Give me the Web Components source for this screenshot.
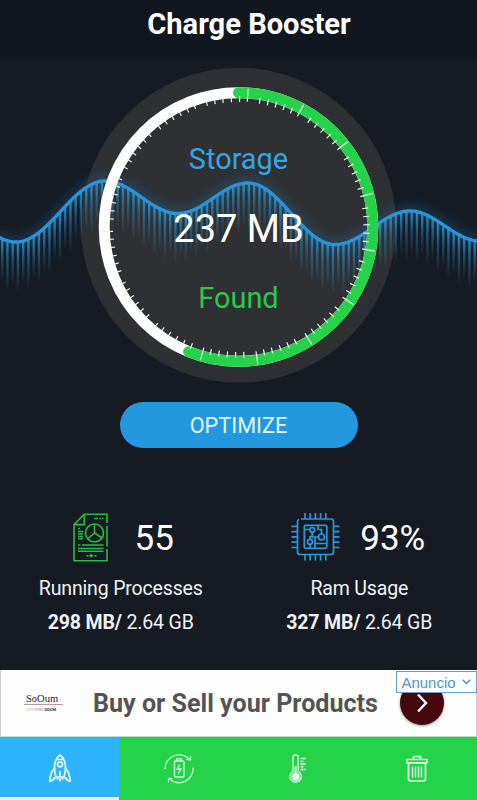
<!DOCTYPE html>
<html lang="en">
<head>
<meta charset="utf-8">
<title>Charge Booster</title>
<style>
    body { margin: 0; background: #161b23; font-family: Roboto, "Liberation Sans", sans-serif; }
</style>
</head>
<body>
<booster-app></booster-app>

<script>
const ICONS = {
    report: `<svg width="36" height="50" viewBox="0 0 36 50" fill="none" stroke="#2aba45" stroke-width="1.6">
        <path d="M34 11V2.2H11.3L1 12.6V48.8H34V37M34 34.5V14M11.3 2.2V12.6H1"/>
        <circle cx="21.5" cy="21" r="9"/>
        <path d="M21.5 12V21L14.5 27M21.5 21L29 26"/>
        <path d="M5 16.5H7M5 19.5H10M5 22H10M5 24.5H10M5 26.8H10M21 6.5H25M26.5 6.5H28M29 6.5H30.5M5 33H7.5M9 33H30.5M5 36.5H30.5M5 39.3H30.5M13.5 43.8H15.5M16.5 43.8H20M21.5 43.8H23.5M18.2 42V45.5"/>
    </svg>`,
    chip: `<svg width="49" height="50" viewBox="0 0 49 50" fill="none" stroke="#2b99d8" stroke-width="1.7">
        <path d="M10 7H40Q42.5 7 42.5 9.5V40Q42.5 42.5 40 42.5H9Q6.5 42.5 6.5 40V9.5Q6.5 8 8 7.3"/>
        <rect x="13.3" y="13.3" width="22.5" height="23" rx="1.5"/>
        <path d="M14 1V7M19.2 1V7M24.4 1V7M29.6 1V7M34.8 1V7M14 42.5V48.5M19.2 42.5V48.5M24.4 42.5V48.5M29.6 42.5V48.5M34.8 42.5V48.5M.5 14.3H6.5M.5 19.6H6.5M.5 24.9H6.5M.5 30.2H6.5M.5 35.5H6.5M42.5 14.3H48.5M42.5 19.6H48.5M42.5 24.9H48.5M42.5 30.2H48.5M42.5 35.5H48.5"/>
        <circle cx="21.2" cy="18" r="2.3"/><circle cx="30.5" cy="25" r="3"/><circle cx="19" cy="29.8" r="2.5"/>
        <path d="M13.3 17.5H19M21.2 20.5V25H27.5M24 25V36M30.5 22V17.5H27V13.5M19 32.5V36M24 31.5H35.5M19 27.3V24.5H21"/>
    </svg>`,
    rocket: `<svg width="22" height="29" viewBox="0 0 22 29" fill="none" stroke="#e8fbff" stroke-width="1.7" stroke-linejoin="round">
        <path d="M11 1C7.5 3.7 5.5 8 5.5 13C5.5 17 6 20 7 23H15C16 20 16.5 17 16.5 13C16.5 8 14.5 3.7 11 1ZM8 5.5H14"/>
        <circle cx="11" cy="10.3" r="2.5"/>
        <path d="M5.5 14.5C2.5 17 1 20 .9 27.5L4 26L5 24H7M16.5 14.5C19.5 17 21 20 21.1 27.5L18 26L17 24H15M11 17V27.5M8.5 23V26M13.5 23V26"/>
    </svg>`,
    battery: `<svg width="30" height="31" viewBox="0 0 30 31" fill="none" stroke="#d6fadf" stroke-width="1.2">
        <path d="M1 16A14 14 0 0 1 25.5 6.5M29 14.5A14 14 0 0 1 5.5 26"/>
        <path d="M26.5 3V7L22.5 6.5M4.5 29.5V25.5L8.5 25.7"/>
        <path d="M12.5 8V5.8H17.5V8"/>
        <rect x="10.5" y="8" width="9.5" height="16" rx="1.3" stroke-width="1.4"/>
        <path d="M16 11.5L13.3 16H17L14.3 20.5" stroke-width="1.4"/>
    </svg>`,
    thermo: `<svg width="18" height="29" viewBox="0 0 18 29" fill="none" stroke="#e3fde9" stroke-width="1.3">
        <path d="M4 17.5V3.5A2.6 2.6 0 0 1 9.2 3.5V17.5A5.7 5.7 0 1 1 4 17.5Z"/>
        <circle cx="6.6" cy="22.7" r="3.5" fill="#e3fde9"/>
        <path d="M6.6 12V20" stroke-width="2"/>
        <path d="M11.5 4.5H16.5M11.5 7.3H14.5M11.5 10H16.5M11.5 12.8H14.5M11.5 15.5H16.5"/>
    </svg>`,
    trash: `<svg width="22" height="27" viewBox="0 0 22 27" fill="none" stroke="#e3fde9" stroke-width="1.7" stroke-linejoin="round">
        <path d="M7.5 4.5V1.5H14.5V4.5M1 4.5H21V7.8H1ZM2.5 8V23.5Q2.5 26 5 26H17Q19.5 26 19.5 23.5V8"/>
        <path d="M6.5 11.5V22.5M9.5 11.5V22.5M12.5 11.5V22.5M15.5 11.5V22.5" stroke-width="1.4"/>
    </svg>`
};

class BoosterApp extends HTMLElement {
    constructor() {
        super();
        this.attachShadow({ mode: 'open' });
        this.shadowRoot.innerHTML = `
            <style>
                :host { display: flex; flex-direction: column; width: 477px; height: 800px; overflow: hidden; background: #161b23; }
                .stats { display: flex; height: 160px; padding-top: 62px; box-sizing: content-box; }
                stat-card { flex: 1; }
            </style>
            <app-header>Charge Booster</app-header>
            <storage-dial>
                <span slot="label">Storage</span>
                <span slot="value">237 MB</span>
                <span slot="status">Found</span>
            </storage-dial>
            <pill-button>OPTIMIZE</pill-button>
            <div class="stats">
                <stat-card icon="report" value="55" label="Running Processes" used="298 MB/" total="2.64 GB" style="--gap: 26px; --shift: 8px"></stat-card>
                <stat-card icon="chip" value="93%" label="Ram Usage" used="327 MB/" total="2.64 GB" style="--gap: 20px; --shift: 1px"></stat-card>
            </div>
            <ad-banner>Buy or Sell your Products</ad-banner>
            <tab-bar>
                <tab-item icon="rocket" active></tab-item>
                <tab-item icon="battery"></tab-item>
                <tab-item icon="thermo"></tab-item>
                <tab-item icon="trash"></tab-item>
            </tab-bar>
        `;
    }
}

class AppHeader extends HTMLElement {
    constructor() {
        super();
        this.attachShadow({ mode: 'open' });
        this.shadowRoot.innerHTML = `
            <style>
                :host {
                    display: block; height: 61px; flex: none; padding-left: 21px; box-sizing: border-box;
                    background: linear-gradient(#12171f 56px, #161b20); color: #fff;
                    font-size: 29.1px; font-weight: 700; line-height: 48px; text-align: center;
                }
            </style>
            <slot></slot>
        `;
    }
}

class StorageDial extends HTMLElement {
    constructor() {
        super();
        this.attachShadow({ mode: 'open' });
        this.shadowRoot.innerHTML = `
            <style>
                :host { display: grid; height: 340px; flex: none; }
                svg, .labels { grid-area: 1 / 1; }
                .labels { display: flex; flex-direction: column; align-items: center; padding-top: 78px; }
                .label, .value, .status { line-height: 40px; white-space: nowrap; }
                .label { font-size: 28.9px; color: #35a5e5; }
                .value { font-size: 38px; color: #fff; margin: 30px 0 29px; }
                .status { font-size: 28.9px; color: #2bc94b; }
            </style>
            <svg width="477" height="340" viewBox="0 61 477 340">
                <defs>
                    <linearGradient id="fade" x1="0" y1="0" x2="0" y2="1">
                        <stop offset="0" stop-color="#2d9ada" stop-opacity=".85"/>
                        <stop offset=".45" stop-color="#2d9ada" stop-opacity=".4"/>
                        <stop offset="1" stop-color="#2d9ada" stop-opacity="0"/>
                    </linearGradient>
                    <filter id="glow" x="-5%" y="-60%" width="110%" height="220%"><feGaussianBlur stdDeviation="6"/></filter>
                </defs>
                <circle cx="238.5" cy="225.3" r="157.5" fill="#2f3033"/>
                <g id="wave"></g>
                <circle cx="238.5" cy="227" r="134.3" fill="none" stroke="#fff" stroke-width="11"/>
                <path id="progress" fill="none" stroke="#25d34a" stroke-width="11" stroke-linecap="round"/>
                <path id="ticks" fill="none" stroke="#e9f5eb" stroke-width="1.2"/>
            </svg>
            <div class="labels">
                <div class="label"><slot name="label"></slot></div>
                <div class="value"><slot name="value"></slot></div>
                <div class="status"><slot name="status"></slot></div>
            </div>
        `;
        this.drawWave();
        this.drawRing();
    }

    point(deg, r) {
        const a = deg * Math.PI / 180;
        return (238.5 + r * Math.sin(a)).toFixed(2) + ' ' + (227 - r * Math.cos(a)).toFixed(2);
    }

    drawWave() {
        // crests and troughs, joined by half cosines
        const turns = [[-72, 190], [16, 242], [105, 181], [178, 213.5], [248, 183], [335, 244.5], [410, 211], [480, 241]];
        const yAt = x => {
            let i = 0;
            while (i < turns.length - 2 && x > turns[i + 1][0]) i++;
            const [x0, y0] = turns[i];
            const [x1, y1] = turns[i + 1];
            return y0 + (y1 - y0) * (1 - Math.cos(Math.PI * (x - x0) / (x1 - x0))) / 2;
        };
        let d = '';
        for (let x = -4; x <= 480; x += 2) d += (d ? 'L' : 'M') + x + ' ' + yAt(x).toFixed(2);
        let bars = '';
        for (let x = 1, i = 0; x < 477; x += 5.25, i++) {
            const h = i % 2 ? 50 : 42;
            bars += `<rect x="${x}" y="${yAt(x + 1).toFixed(2)}" width="2.4" height="${h}" fill="url(#fade)"/>`;
        }
        this.shadowRoot.getElementById('wave').innerHTML =
            `<path d="${d}" fill="none" stroke="#1c7fc4" stroke-width="8" opacity=".4" filter="url(#glow)"/>` +
            bars + `<path d="${d}" fill="none" stroke="#2b93d6" stroke-width="3.4"/>`;
    }

    drawRing() {
        this.shadowRoot.getElementById('progress').setAttribute('d',
            `M${this.point(0, 134.3)}A134.3 134.3 0 1 1 ${this.point(201.8, 134.3)}`);
        let d = '';
        for (let major = 4; major < 364; major += 24) {
            d += `M${this.point(major, 125.5)}L${this.point(major, 138.5)}`;
            [5.6, 9.3, 13, 16.8, 20.5].forEach(step => {
                d += `M${this.point(major + step, 125)}L${this.point(major + step, 131)}`;
            });
        }
        this.shadowRoot.getElementById('ticks').setAttribute('d', d);
    }
}

class PillButton extends HTMLElement {
    constructor() {
        super();
        this.attachShadow({ mode: 'open' });
        this.shadowRoot.innerHTML = `
            <style>
                :host { display: flex; justify-content: center; height: 47px; flex: none; }
                button {
                    width: 238px; height: 46px; margin: 1px 0 0; padding: 0; border: 0; border-radius: 23px;
                    background: #2498df; color: #e2f6ff; font: 400 21.7px/47px Roboto, "Liberation Sans", sans-serif;
                }
            </style>
            <button><slot></slot></button>
        `;
    }
}

class StatCard extends HTMLElement {
    connectedCallback() {
        this.attachShadow({ mode: 'open' });
        this.shadowRoot.innerHTML = `
            <style>
                :host { display: flex; flex-direction: column; align-items: center; color: #f1f2f3; white-space: nowrap; }
                .top { display: flex; align-items: center; gap: var(--gap); height: 54px; padding-left: var(--shift); }
                svg { display: block; }
                .value { font-size: 35px; line-height: 54px; padding-top: 4px; color: #fff; }
                .label, .usage { font-size: 19.5px; letter-spacing: -.16px; line-height: 30px; padding-left: 3px; }
                .label { margin-top: 10px; }
                .usage { margin-top: 4px; }
            </style>
            <div class="top">${ICONS[this.getAttribute('icon')]}<span class="value">${this.getAttribute('value')}</span></div>
            <div class="label">${this.getAttribute('label')}</div>
            <div class="usage"><b>${this.getAttribute('used')}</b> ${this.getAttribute('total')}</div>
        `;
    }
}

class AdBanner extends HTMLElement {
    constructor() {
        super();
        this.attachShadow({ mode: 'open' });
        this.shadowRoot.innerHTML = `
            <style>
                :host {
                    display: flex; align-items: center; position: relative; height: 66px; flex: none; box-sizing: border-box;
                    background: #fefefe; border-left: 1px solid #ccc; border-right: 1px solid #ccc;
                }
                .logo { width: 39px; margin-left: 23px; margin-top: -1px; text-align: center; }
                .brand {
                    font: 10.5px/11px "Liberation Serif", serif; color: #38181c; padding-right: 3px;
                    border-bottom: 1px solid #b99a9c;
                }
                .tag { font-size: 4px; line-height: 5px; margin-top: 2px; padding-right: 4px; color: #999; white-space: nowrap; }
                .tag b { color: #333; }
                .text { margin-left: 30px; color: #545454; font-size: 25.1px; font-weight: 700; white-space: nowrap; }
                .go {
                    position: absolute; left: 399px; top: 11px; width: 44px; height: 44px; border-radius: 50%;
                    background: #45060d; box-shadow: 0 1px 3px #0006;
                }
                .go svg { display: block; }
                .badge {
                    position: absolute; right: -1px; top: 1px; width: 81px; height: 22px; box-sizing: border-box;
                    border: 1px solid #5e9fd8; background: #fff; color: #5093d2;
                    display: flex; align-items: center; justify-content: center; gap: 6px; padding-right: 1px;
                    font: 15px "Liberation Sans", sans-serif;
                }
            </style>
            <div class="logo"><div class="brand">SoOum</div><div class="tag">OTCPINK:<b>SOUM</b></div></div>
            <div class="text"><slot></slot></div>
            <div class="go"><svg width="44" height="44" fill="none" stroke="#fff" stroke-width="2.4"><path d="M18 13.5L26 22L18 30.5"/></svg></div>
            <div class="badge">Anuncio<svg width="9" height="6" fill="none" stroke="#5093d2" stroke-width="1.4"><path d="M.7 .8L4.5 4.5L8.3 .8"/></svg></div>
        `;
    }
}

class TabBar extends HTMLElement {
    constructor() {
        super();
        this.attachShadow({ mode: 'open' });
        this.shadowRoot.innerHTML = `
            <style>
                :host { display: flex; height: 64px; flex: none; box-sizing: border-box; border-top: 1px solid #b9dfcd; background: #25d34a; }
            </style>
            <slot></slot>
        `;
    }
}

class TabItem extends HTMLElement {
    connectedCallback() {
        this.attachShadow({ mode: 'open' });
        this.shadowRoot.innerHTML = `
            <style>
                :host { display: flex; flex: 1; align-items: center; justify-content: center; box-sizing: border-box; border-bottom: 3px solid transparent; padding-top: 2px; }
                :host([active]) { background: #2eb4ff; border-bottom-color: #f4fbff; }
            </style>
            ${ICONS[this.getAttribute('icon')]}
        `;
    }
}

customElements.define('app-header', AppHeader);
customElements.define('storage-dial', StorageDial);
customElements.define('pill-button', PillButton);
customElements.define('stat-card', StatCard);
customElements.define('ad-banner', AdBanner);
customElements.define('tab-bar', TabBar);
customElements.define('tab-item', TabItem);
customElements.define('booster-app', BoosterApp);
</script>
</body>
</html>
